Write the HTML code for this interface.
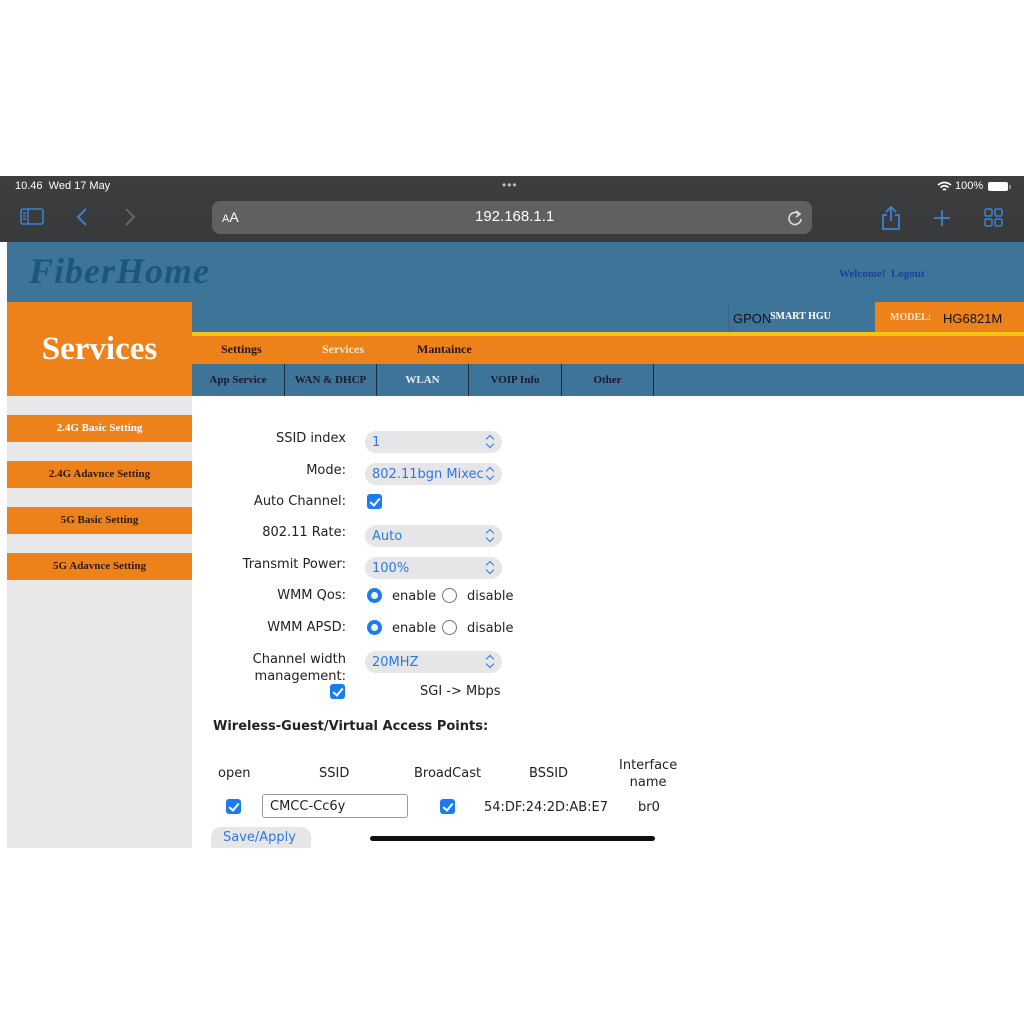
<!DOCTYPE html>
<html><head><meta charset="utf-8"><style>
*{margin:0;padding:0;box-sizing:border-box}
body{width:1024px;height:1024px;background:#fff;position:relative;overflow:hidden;font-family:"Liberation Sans",sans-serif}
.a{position:absolute}
.serif{font-family:"Liberation Serif",serif;font-weight:bold}
.side{left:7px;width:185px;height:27px;background:#ee821a;font-size:11px;color:#2a1a10;text-align:center;line-height:27px}
.lbl{font-family:"DejaVu Sans",sans-serif;font-size:13px;color:#222;text-align:right;width:160px;left:186px}
.sel{left:365px;width:137px;height:22px;background:#e6e6e8;border-radius:11px;font-family:"DejaVu Sans",sans-serif;font-size:13px;color:#2a7ae2;padding:4px 0 0 7px}
.sel:after{content:"";position:absolute;right:9px;top:5px;width:5px;height:5px;border-left:1.5px solid #2a7ae2;border-top:1.5px solid #2a7ae2;transform:rotate(45deg)}
.sel:before{content:"";position:absolute;right:9px;top:10px;width:5px;height:5px;border-right:1.5px solid #2a7ae2;border-bottom:1.5px solid #2a7ae2;transform:rotate(45deg)}
.cb{width:15px;height:15px;background:#1a7cf0;border-radius:3px}
.cb:after{content:"";position:absolute;left:4.5px;top:1.5px;width:4px;height:8px;border-right:2px solid #fff;border-bottom:2px solid #fff;transform:rotate(40deg)}
.t{font-family:"DejaVu Sans",sans-serif;font-size:13px;color:#222}
.ron{width:15px;height:15px;border-radius:50%;border:4.5px solid #1a7cf0;background:#fff}
.roff{width:15px;height:15px;border-radius:50%;border:1px solid #777;background:#fff}
.sub{top:364px;height:32px;border-right:1px solid #1a2b3a;color:#1a1a2a;font-size:11px;text-align:center;line-height:32px}
</style></head><body>
<div class="a" style="left:0;top:176px;width:1024px;height:66px;background:linear-gradient(#3d3e40,#38393b)"></div>
<div class="a" style="left:15px;top:180px;font-size:11px;color:#fff">10.46&nbsp; Wed 17 May</div>
<div class="a" style="left:502px;top:178px;font-size:12px;color:#bbb;letter-spacing:1px">•••</div>
<div class="a" style="left:955px;top:180px;font-size:11px;color:#fff">100%</div>
<svg class="a" style="left:937px;top:181px" width="15" height="11" viewBox="0 0 15 11"><path d="M1 4Q7.5-1 14 4M3.5 6.5Q7.5 3 11.5 6.5M6 9Q7.5 7.5 9 9" stroke="#fff" stroke-width="1.6" fill="none"/></svg>
<div class="a" style="left:988px;top:182px;width:20px;height:9px;border-radius:2px;background:#fff"></div>
<div class="a" style="left:1009px;top:185px;width:2px;height:4px;background:#888"></div>
<svg class="a" style="left:20px;top:207px" width="24" height="20" viewBox="0 0 24 20"><rect x="1" y="2" width="22" height="15" rx="2" stroke="#3b82d8" stroke-width="1.6" fill="none"/><path d="M8 2V17M3 6h3M3 9h3M3 12h3" stroke="#3b82d8" stroke-width="1.4"/></svg>
<svg class="a" style="left:75px;top:207px" width="14" height="20"><path d="M11 2L3 10L11 18" stroke="#3b82d8" stroke-width="2" fill="none"/></svg>
<svg class="a" style="left:123px;top:207px" width="14" height="20"><path d="M3 2L11 10L3 18" stroke="#666" stroke-width="2" fill="none"/></svg>
<div class="a" style="left:212px;top:201px;width:600px;height:33px;background:#5f6062;border-radius:8px"></div>
<div class="a" style="left:222px;top:209px;font-size:14px;color:#fff"><span style="font-size:11px">A</span>A</div>
<div class="a" style="left:475px;top:208px;font-size:15px;color:#fff">192.168.1.1</div>
<svg class="a" style="left:787px;top:209px" width="16" height="18"><path d="M12 5A6 6 0 1 0 14 10" stroke="#ddd" stroke-width="1.6" fill="none"/><path d="M9 2L13 5L9 8" stroke="#ddd" stroke-width="1.6" fill="none"/></svg>
<svg class="a" style="left:880px;top:205px" width="22" height="26"><path d="M7 10H3V24H19V10H15M11 16V2M6 7L11 2L16 7" stroke="#3b82d8" stroke-width="1.8" fill="none"/></svg>
<svg class="a" style="left:932px;top:208px" width="20" height="20"><path d="M10 2V18M2 10H18" stroke="#3b82d8" stroke-width="1.8"/></svg>
<svg class="a" style="left:984px;top:207px" width="20" height="22"><g stroke="#3b82d8" stroke-width="1.5" fill="none"><rect x="1" y="2" width="7" height="7" rx="1.5"/><rect x="11" y="2" width="7" height="7" rx="1.5"/><rect x="1" y="12" width="7" height="7" rx="1.5"/><rect x="11" y="12" width="7" height="7" rx="1.5"/></g></svg>

<div class="a" style="left:7px;top:242px;width:1017px;height:60px;background:#3f7499"></div>
<div class="a serif" style="left:29px;top:250px;font-size:36px;font-style:italic;color:#19587a;letter-spacing:1px">FiberHome</div>
<div class="a serif" style="left:839px;top:268px;font-size:11px;color:#1c3fa0">Welcome!&nbsp; Logout</div>
<div class="a" style="left:7px;top:302px;width:185px;height:94px;background:#ee821a"></div>
<div class="a serif" style="left:7px;top:331px;width:185px;text-align:center;font-size:33px;color:#fff">Services</div>
<div class="a" style="left:192px;top:302px;width:832px;height:31px;background:#3f7499"></div>
<div class="a" style="left:728px;top:302px;width:1px;height:31px;background:#36688a"></div>
<div class="a" style="left:733px;top:311px;font-size:13px;color:#111">GPON</div>
<div class="a serif" style="left:770px;top:311px;font-size:10px;color:#fff;font-weight:bold">SMART HGU</div>
<div class="a" style="left:875px;top:302px;width:149px;height:31px;background:#ee821a"></div>
<div class="a serif" style="left:890px;top:312px;font-size:10px;color:#fbe8d0">MODEL:</div>
<div class="a" style="left:943px;top:311px;font-size:13px;color:#111">HG6821M</div>
<div class="a" style="left:192px;top:332px;width:832px;height:4px;background:#f5c516"></div>
<div class="a" style="left:192px;top:336px;width:832px;height:28px;background:#ee821a"></div>
<div class="a serif" style="left:221px;top:342px;font-size:12px;color:#2a1508">Settings</div>
<div class="a serif" style="left:322px;top:342px;font-size:12px;color:#fde8cc">Services</div>
<div class="a serif" style="left:417px;top:342px;font-size:12px;color:#2a1508">Mantaince</div>
<div class="a" style="left:192px;top:364px;width:832px;height:32px;background:#3f7499"></div>
<div class="a sub serif" style="left:192px;width:93px">App Service</div>
<div class="a sub serif" style="left:285px;width:92px">WAN &amp; DHCP</div>
<div class="a sub serif" style="left:377px;width:92px;color:#eef">WLAN</div>
<div class="a sub serif" style="left:469px;width:93px">VOIP Info</div>
<div class="a sub serif" style="left:562px;width:92px">Other</div>

<div class="a" style="left:7px;top:396px;width:185px;height:452px;background:#e8e8e8"></div>
<div class="a side serif" style="top:415px;color:#fff">2.4G Basic Setting</div>
<div class="a side serif" style="top:461px">2.4G Adavnce Setting</div>
<div class="a side serif" style="top:507px">5G Basic Setting</div>
<div class="a side serif" style="top:553px">5G Adavnce Setting</div>

<div class="a lbl" style="top:431px">SSID index</div>
<div class="a sel" style="top:431px">1</div>
<div class="a lbl" style="top:463px">Mode:</div>
<div class="a sel" style="top:463px">802.11bgn Mixec</div>
<div class="a lbl" style="top:494px">Auto Channel:</div>
<div class="a cb" style="left:367px;top:494px"></div>
<div class="a lbl" style="top:525px">802.11 Rate:</div>
<div class="a sel" style="top:525px">Auto</div>
<div class="a lbl" style="top:557px">Transmit Power:</div>
<div class="a sel" style="top:557px">100%</div>
<div class="a lbl" style="top:588px">WMM Qos:</div>
<div class="a ron" style="left:367px;top:588px"></div>
<div class="a t" style="left:392px;top:589px">enable</div>
<div class="a roff" style="left:442px;top:588px"></div>
<div class="a t" style="left:467px;top:589px">disable</div>
<div class="a lbl" style="top:620px">WMM APSD:</div>
<div class="a ron" style="left:367px;top:620px"></div>
<div class="a t" style="left:392px;top:621px">enable</div>
<div class="a roff" style="left:442px;top:620px"></div>
<div class="a t" style="left:467px;top:621px">disable</div>
<div class="a lbl" style="top:651px;line-height:17px">Channel width<br>management:</div>
<div class="a sel" style="top:651px">20MHZ</div>
<div class="a cb" style="left:330px;top:684px"></div>
<div class="a t" style="left:420px;top:684px">SGI -&gt; Mbps</div>
<div class="a t" style="left:213px;top:719px;font-weight:bold">Wireless-Guest/Virtual Access Points:</div>
<div class="a t" style="left:218px;top:766px">open</div>
<div class="a t" style="left:319px;top:766px">SSID</div>
<div class="a t" style="left:414px;top:766px">BroadCast</div>
<div class="a t" style="left:529px;top:766px">BSSID</div>
<div class="a t" style="left:619px;top:757px;text-align:center;line-height:17px">Interface<br>name</div>
<div class="a cb" style="left:226px;top:799px"></div>
<div class="a" style="left:262px;top:794px;width:146px;height:24px;border:1px solid #999;border-radius:3px"></div>
<div class="a t" style="left:270px;top:799px">CMCC-Cc6y</div>
<div class="a cb" style="left:440px;top:799px"></div>
<div class="a t" style="left:484px;top:800px">54:DF:24:2D:AB:E7</div>
<div class="a t" style="left:638px;top:800px">br0</div>
<div class="a" style="left:211px;top:827px;width:100px;height:21px;background:#e6e6e8;border-radius:10px 10px 0 0"></div>
<div class="a t" style="left:223px;top:830px;color:#2a7ae2">Save/Apply</div>
<div class="a" style="left:370px;top:836px;width:285px;height:5px;border-radius:3px;background:#111"></div>
</body></html>
